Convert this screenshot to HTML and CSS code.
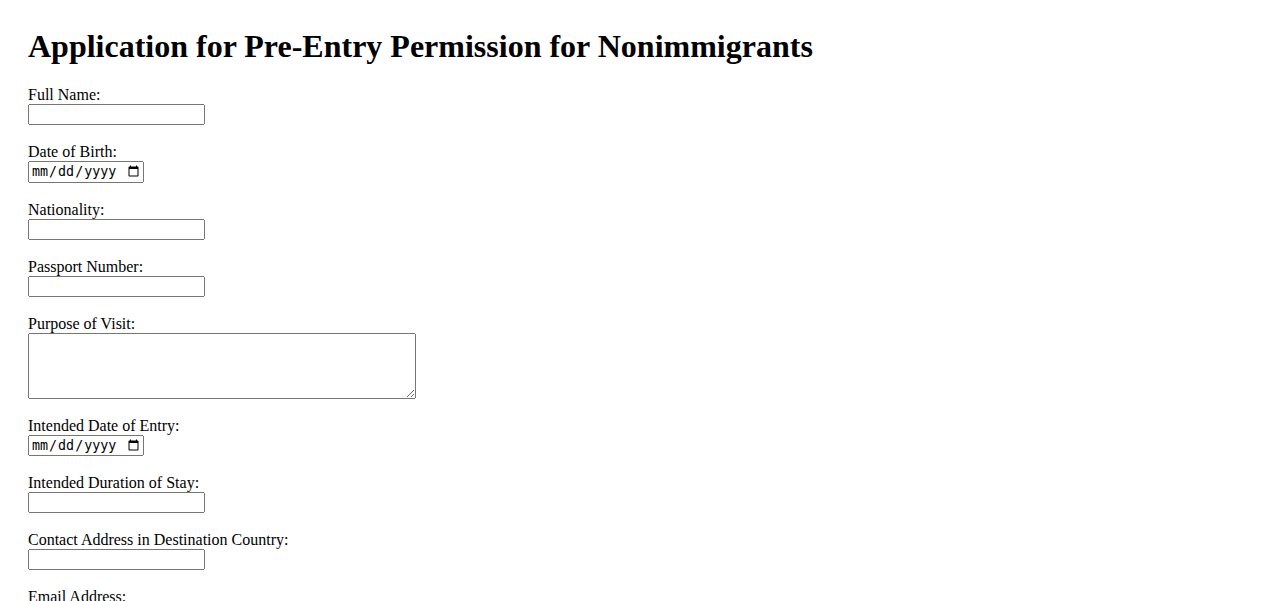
FILE: index.html
```html
<!DOCTYPE html>
<html lang="en">
<head>
<meta charset="utf-8">
<title>Application for Pre-Entry Permission for Nonimmigrants</title>
<link rel="stylesheet" href="styles.css">
</head>
<body>
<div class="page">
  <h1 class="title">Application for Pre-Entry Permission for Nonimmigrants</h1>
  <form class="form">
    <div class="field">
      <label class="label" for="name">Full Name:</label>
      <input class="text" id="name" type="text">
    </div>
    <div class="field">
      <label class="label" for="dob">Date of Birth:</label>
      <input class="date" id="dob" type="date">
    </div>
    <div class="field">
      <label class="label" for="nat">Nationality:</label>
      <input class="text" id="nat" type="text">
    </div>
    <div class="field">
      <label class="label" for="pass">Passport Number:</label>
      <input class="text" id="pass" type="text">
    </div>
    <div class="field">
      <label class="label" for="purpose">Purpose of Visit:</label>
      <textarea class="area" id="purpose"></textarea>
    </div>
    <div class="field">
      <label class="label" for="entry">Intended Date of Entry:</label>
      <input class="date" id="entry" type="date">
    </div>
    <div class="field">
      <label class="label" for="dur">Intended Duration of Stay:</label>
      <input class="text" id="dur" type="text">
    </div>
    <div class="field">
      <label class="label" for="addr">Contact Address in Destination Country:</label>
      <input class="text" id="addr" type="text">
    </div>
    <div class="field">
      <label class="label" for="email">Email Address:</label>
      <input class="text" id="email" type="email">
    </div>
  </form>
</div>
</body>
</html>
```

FILE: styles.css
```css
html, body {
  margin: 0;
  padding: 0;
  background: #ffffff;
}

body {
  font-family: "Liberation Serif", "Times New Roman", serif;
  font-size: 16px;
  color: #000000;
}

.page {
  padding: 28px;
}

.title {
  margin: 0 0 21px 0;
  font-size: 32px;
  font-weight: bold;
  line-height: 37px;
  color: #000000;
}

.form {
  display: flex;
  flex-direction: column;
  gap: 18px;
}

.field {
  display: flex;
  flex-direction: column;
  align-items: flex-start;
}

.label {
  display: block;
  line-height: 18px;
  height: 18px;
}

.text {
  box-sizing: border-box;
  width: 177px;
  height: 21px;
  margin: 0;
  font-size: 13.33px;
}

.date {
  box-sizing: border-box;
  width: 116px;
  height: 21.5px;
  margin: 0;
  font-size: 13.33px;
}

.area {
  box-sizing: border-box;
  width: 388px;
  height: 66px;
  margin: 0;
  font-size: 13.33px;
}
```
